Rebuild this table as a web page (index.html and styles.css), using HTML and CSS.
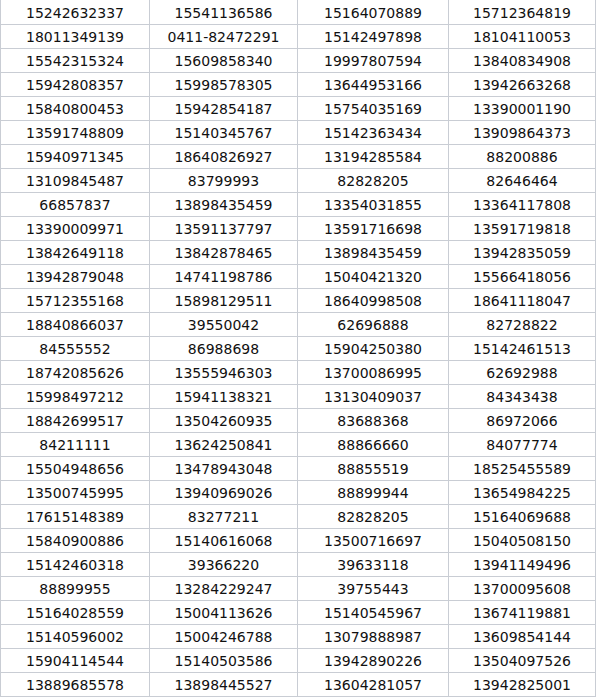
FILE: index.html
```html
<!DOCTYPE html>
<html>
<head>
<meta charset="utf-8">
<link rel="stylesheet" href="styles.css">
</head>
<body>
<div class="sheet">
<div class="c">15242632337</div><div class="c">15541136586</div><div class="c">15164070889</div><div class="c">15712364819</div>
<div class="c">18011349139</div><div class="c">0411-82472291</div><div class="c">15142497898</div><div class="c">18104110053</div>
<div class="c">15542315324</div><div class="c">15609858340</div><div class="c">19997807594</div><div class="c">13840834908</div>
<div class="c">15942808357</div><div class="c">15998578305</div><div class="c">13644953166</div><div class="c">13942663268</div>
<div class="c">15840800453</div><div class="c">15942854187</div><div class="c">15754035169</div><div class="c">13390001190</div>
<div class="c">13591748809</div><div class="c">15140345767</div><div class="c">15142363434</div><div class="c">13909864373</div>
<div class="c">15940971345</div><div class="c">18640826927</div><div class="c">13194285584</div><div class="c">88200886</div>
<div class="c">13109845487</div><div class="c">83799993</div><div class="c">82828205</div><div class="c">82646464</div>
<div class="c">66857837</div><div class="c">13898435459</div><div class="c">13354031855</div><div class="c">13364117808</div>
<div class="c">13390009971</div><div class="c">13591137797</div><div class="c">13591716698</div><div class="c">13591719818</div>
<div class="c">13842649118</div><div class="c">13842878465</div><div class="c">13898435459</div><div class="c">13942835059</div>
<div class="c">13942879048</div><div class="c">14741198786</div><div class="c">15040421320</div><div class="c">15566418056</div>
<div class="c">15712355168</div><div class="c">15898129511</div><div class="c">18640998508</div><div class="c">18641118047</div>
<div class="c">18840866037</div><div class="c">39550042</div><div class="c">62696888</div><div class="c">82728822</div>
<div class="c">84555552</div><div class="c">86988698</div><div class="c">15904250380</div><div class="c">15142461513</div>
<div class="c">18742085626</div><div class="c">13555946303</div><div class="c">13700086995</div><div class="c">62692988</div>
<div class="c">15998497212</div><div class="c">15941138321</div><div class="c">13130409037</div><div class="c">84343438</div>
<div class="c">18842699517</div><div class="c">13504260935</div><div class="c">83688368</div><div class="c">86972066</div>
<div class="c">84211111</div><div class="c">13624250841</div><div class="c">88866660</div><div class="c">84077774</div>
<div class="c">15504948656</div><div class="c">13478943048</div><div class="c">88855519</div><div class="c">18525455589</div>
<div class="c">13500745995</div><div class="c">13940969026</div><div class="c">88899944</div><div class="c">13654984225</div>
<div class="c">17615148389</div><div class="c">83277211</div><div class="c">82828205</div><div class="c">15164069688</div>
<div class="c">15840900886</div><div class="c">15140616068</div><div class="c">13500716697</div><div class="c">15040508150</div>
<div class="c">15142460318</div><div class="c">39366220</div><div class="c">39633118</div><div class="c">13941149496</div>
<div class="c">88899955</div><div class="c">13284229247</div><div class="c">39755443</div><div class="c">13700095608</div>
<div class="c">15164028559</div><div class="c">15004113626</div><div class="c">15140545967</div><div class="c">13674119881</div>
<div class="c">15140596002</div><div class="c">15004246788</div><div class="c">13079888987</div><div class="c">13609854144</div>
<div class="c">15904114544</div><div class="c">15140503586</div><div class="c">13942890226</div><div class="c">13504097526</div>
<div class="c">13889685578</div><div class="c">13898445527</div><div class="c">13604281057</div><div class="c">13942825001</div>
</div>
</body>
</html>
```
FILE: styles.css
```css
html, body {
  margin: 0;
  padding: 0;
  background: #ffffff;
}
.sheet {
  display: grid;
  grid-template-columns: 148px 147px 150px 146px;
  grid-template-rows: 24px repeat(28, 23px);
  gap: 1px;
  padding: 0 1px 1px 1px;
  width: 594px;
  background: #c9cdd4;
  font-family: "DejaVu Sans", Verdana, sans-serif;
  font-size: 14px;
  color: #111111;
}
.c {
  background: #ffffff;
  display: flex;
  align-items: center;
  justify-content: center;
  line-height: 1;
  padding-top: 1px;
}
```
